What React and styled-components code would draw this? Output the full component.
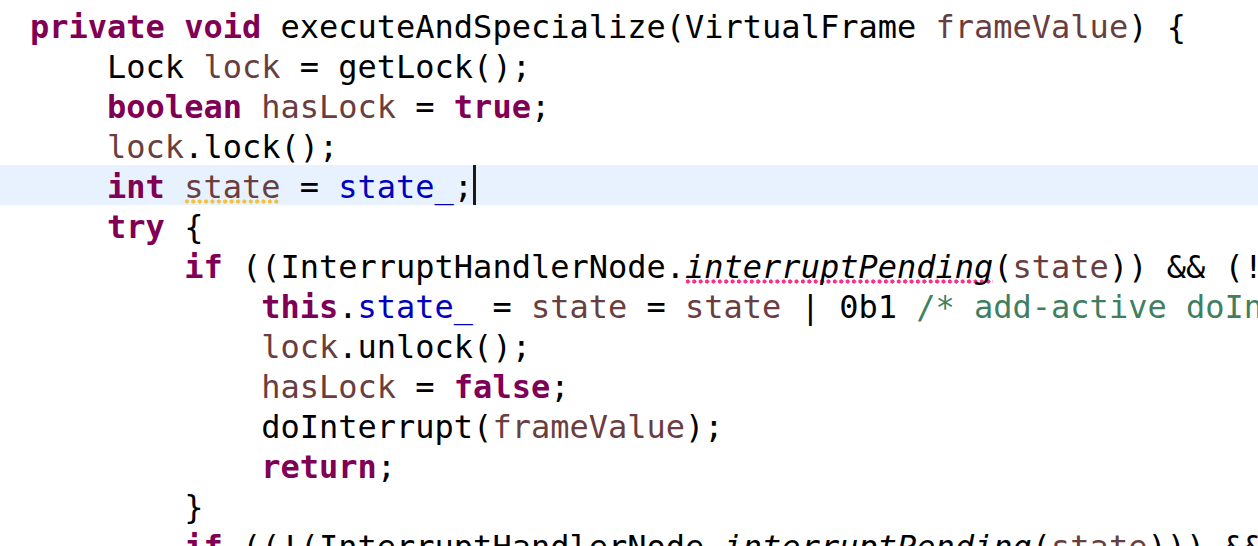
import styled, { createGlobalStyle, css } from "styled-components";

const GlobalStyle = createGlobalStyle`
  html, body {
    margin: 0;
    padding: 0;
    background: #ffffff;
  }
`;

const Editor = styled.div`
  width: 1258px;
  height: 546px;
  overflow: hidden;
  padding-top: 5px;
  box-sizing: border-box;
  font-family: "DejaVu Sans Mono", "Liberation Mono", monospace;
  font-size: 32px;
  line-height: 40px;
  color: #000000;
`;

const Line = styled.div`
  height: 40px;
  box-sizing: border-box;
  padding-top: 2px;
  padding-left: 30px;
  white-space: pre;
  ${(p) =>
    p.$active &&
    css`
      background: #e8f2fe;
    `}
`;

const Kw = styled.span`
  color: #7f0055;
  font-weight: bold;
`;

const Local = styled.span`
  color: #6a3e3e;
`;

const Field = styled.span`
  color: #0000c0;
`;

const Static = styled.span`
  font-style: italic;
`;

const Comment = styled.span`
  color: #3f7f5f;
`;

// eclipse style dotted warning/error underline
const Squiggle = styled.span`
  background-image: radial-gradient(circle at 3px 2.5px, ${(p) => p.$color} 1.9px, transparent 2.3px);
  background-size: 6.4px 5px;
  background-repeat: repeat-x;
  background-position: 0 calc(100% - 2px);
`;

const Caret = styled.span`
  display: inline-block;
  width: 3px;
  height: 40px;
  margin-top: -2px;
  vertical-align: top;
  background: #1a1a1a;
`;

const indent = (n) => " ".repeat(n * 4);

export default function App() {
  return (
    <>
      <GlobalStyle />
      <Editor>
        <Line>
          <Kw>private</Kw> <Kw>void</Kw> executeAndSpecialize(VirtualFrame <Local>frameValue</Local>) {"{"}
        </Line>
        <Line>
          {indent(1)}Lock <Local>lock</Local> = getLock();
        </Line>
        <Line>
          {indent(1)}<Kw>boolean</Kw> <Local>hasLock</Local> = <Kw>true</Kw>;
        </Line>
        <Line>
          {indent(1)}<Local>lock</Local>.lock();
        </Line>
        <Line $active>
          {indent(1)}<Kw>int</Kw> <Squiggle $color="#f2c141"><Local>state</Local></Squiggle> = <Field>state_</Field>;<Caret />
        </Line>
        <Line>
          {indent(1)}<Kw>try</Kw> {"{"}
        </Line>
        <Line>
          {indent(2)}<Kw>if</Kw> ((InterruptHandlerNode.<Squiggle $color="#f2338d"><Static>interruptPending</Static></Squiggle>(<Local>state</Local>)) &amp;&amp; (!
        </Line>
        <Line>
          {indent(3)}<Kw>this</Kw>.<Field>state_</Field> = <Local>state</Local> = <Local>state</Local> | 0b1 <Comment>/* add-active doIn</Comment>
        </Line>
        <Line>
          {indent(3)}<Local>lock</Local>.unlock();
        </Line>
        <Line>
          {indent(3)}<Local>hasLock</Local> = <Kw>false</Kw>;
        </Line>
        <Line>
          {indent(3)}doInterrupt(<Local>frameValue</Local>);
        </Line>
        <Line>
          {indent(3)}<Kw>return</Kw>;
        </Line>
        <Line>
          {indent(2)}{"}"}
        </Line>
        <Line>
          {indent(2)}<Kw>if</Kw> ((!(InterruptHandlerNode.<Static>interruptPending</Static>(<Local>state</Local>))) &amp;&amp;
        </Line>
      </Editor>
    </>
  );
}
